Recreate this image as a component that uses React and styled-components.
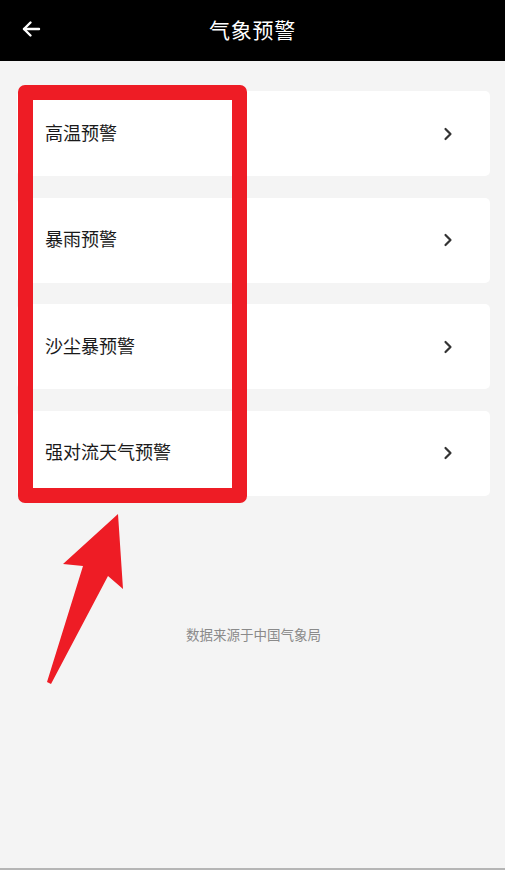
import React from 'react'
import styled, { createGlobalStyle } from 'styled-components';

const warnings = ['高温预警', '暴雨预警', '沙尘暴预警', '强对流天气预警'];

export default function App() {
  return (
    <Page>
      <GlobalStyle />
      <Header>
        <BackButton>
          <svg width="20" height="20" viewBox="0 0 20 20" fill="none" stroke="#fff" strokeWidth="2.4" strokeLinecap="round" strokeLinejoin="round">
            <path d="M18 10H3" />
            <path d="M9.5 3.5L3 10l6.5 6.5" />
          </svg>
        </BackButton>
        <Title>气象预警</Title>
      </Header>
      <Content>
        <List>
          {warnings.map((name) => (
            <Card key={name}>
              <CardName>{name}</CardName>
              <svg width="12" height="14" viewBox="0 0 12 14" fill="none" stroke="#333" strokeWidth="2.2" strokeLinecap="round" strokeLinejoin="round">
                <path d="M3.5 2l5 5-5 5" />
              </svg>
            </Card>
          ))}
        </List>
        <Source>数据来源于中国气象局</Source>
        <Highlight />
        <Pointer width="505" height="700" viewBox="0 0 505 700">
          <polygon points="118,514 123,589 108,576 51,684 47,682 83,566 63,564" fill="#ee1c25" strokeLinejoin="round" />
        </Pointer>
      </Content>
    </Page>
  )
}

const GlobalStyle = createGlobalStyle`
  body {
    margin: 0;
    background: #f4f4f4;
    font-family: "Noto Sans CJK SC", "Noto Sans", sans-serif;
  }
`;

const Page = styled.div`
  position: relative;
  width: 505px;
  height: 870px;
  background: #f4f4f4;
  border-bottom: 2px solid #b5b5b5;
  box-sizing: border-box;
  overflow: hidden;
`;

const Header = styled.div`
  position: relative;
  height: 61px;
  background: #000;
  display: flex;
  align-items: center;
  justify-content: center;
`;

const BackButton = styled.div`
  position: absolute;
  left: 21px;
  top: 19px;
  width: 20px;
  height: 20px;
  display: flex;
`;

const Title = styled.div`
  color: #fff;
  font-size: 21px;
  margin-top: -4px;
  letter-spacing: 0.8px;
`;

const Content = styled.div`
  padding: 30px 15px 0 17px;
`;

const List = styled.div`
  display: flex;
  flex-direction: column;
  gap: 21.5px;
`;

const Card = styled.div`
  height: 85px;
  background: #fff;
  border-radius: 5px;
  display: flex;
  align-items: center;
  justify-content: space-between;
  padding: 0 36px 0 28px;
`;

const CardName = styled.div`
  font-size: 18px;
  color: #1a1a1a;
  margin-top: -4px;
`;

const Source = styled.div`
  margin-top: 128px;
  text-align: center;
  font-size: 13.5px;
  color: #8a8a8a;
`;

const Highlight = styled.div`
  position: absolute;
  left: 18px;
  top: 85px;
  width: 229px;
  height: 418px;
  border: 15px solid #ee1c25;
  border-radius: 7px;
  box-sizing: border-box;
`;

const Pointer = styled.svg`
  position: absolute;
  left: 0;
  top: 0;
`;
